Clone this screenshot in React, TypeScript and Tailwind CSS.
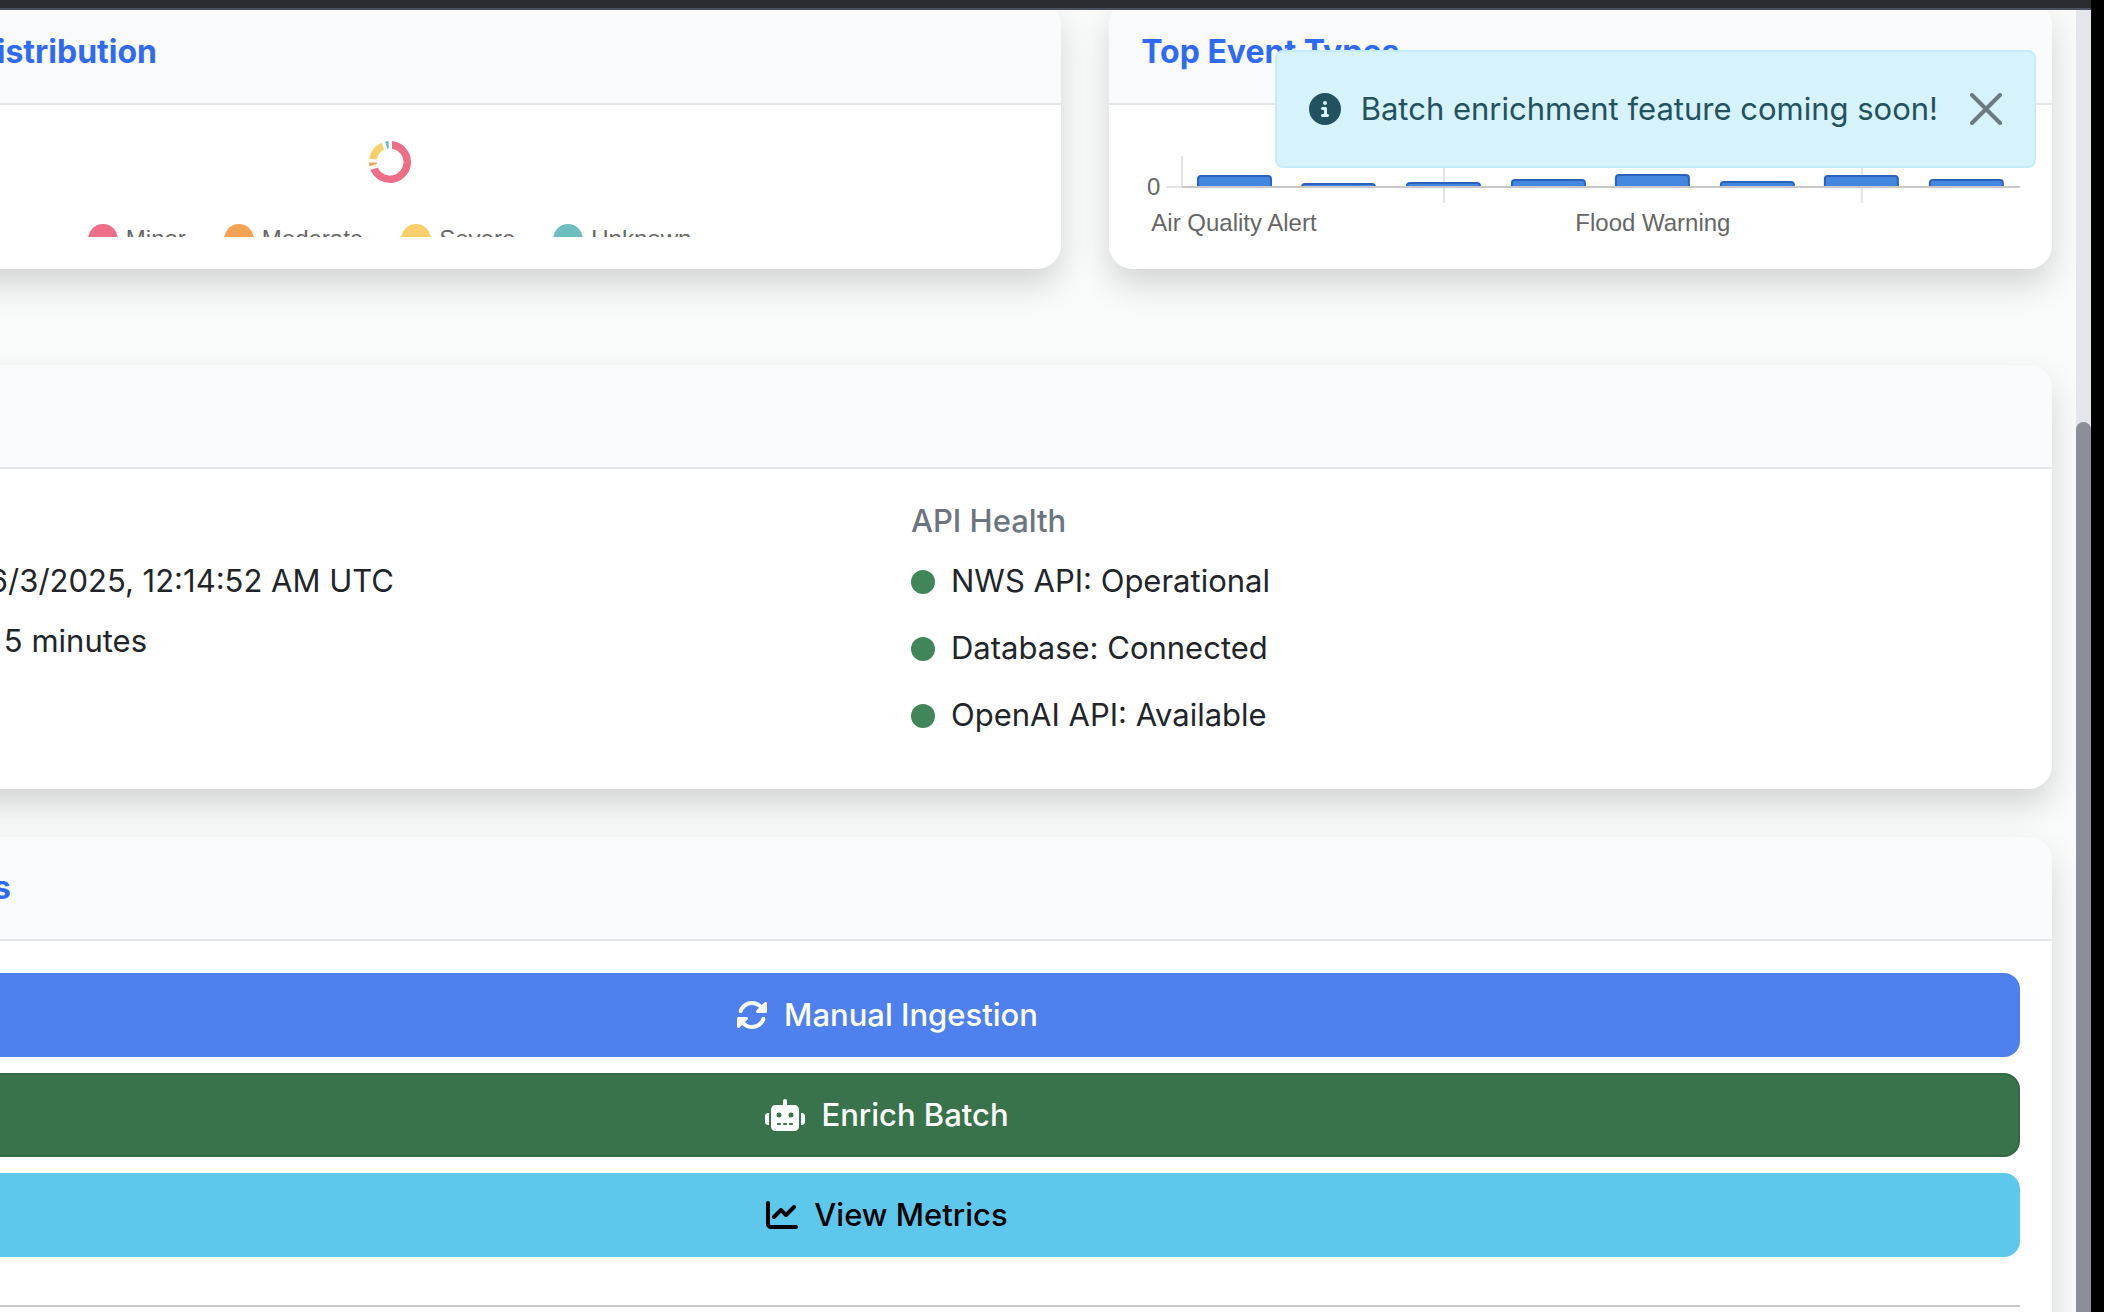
import type { ReactNode } from "react";
import { FaChartLine, FaCircleInfo, FaRobot, FaRotate } from "react-icons/fa6";

const severities = [
  { label: "Minor", dot: "bg-[#ef6e87]" },
  { label: "Moderate", dot: "bg-[#f2a354]" },
  { label: "Severe", dot: "bg-[#f8cf6a]" },
  { label: "Unknown", dot: "bg-[#6fbebf]" },
];

const bars = [
  { x: 56, h: 12 },
  { x: 160, h: 4 },
  { x: 265, h: 5 },
  { x: 370, h: 8 },
  { x: 474, h: 13 },
  { x: 579, h: 6 },
  { x: 683, h: 12 },
  { x: 788, h: 8 },
];

const health = [
  "NWS API: Operational",
  "Database: Connected",
  "OpenAI API: Available",
];

const actions = [
  {
    label: "Manual Ingestion",
    icon: FaRotate,
    iconSize: "h-8 w-8",
    style: "bg-[#4f81ee] border-[#4f81ee] text-white",
  },
  {
    label: "Enrich Batch",
    icon: FaRobot,
    iconSize: "h-8 w-10",
    style: "bg-[#38734b] border-[#336a45] text-white",
  },
  {
    label: "View Metrics",
    icon: FaChartLine,
    iconSize: "h-8 w-8",
    style: "bg-[#5ec7ec] border-[#5ec7ec] text-black",
  },
];

function Card({
  title,
  className = "",
  children,
}: {
  title: ReactNode;
  className?: string;
  children: ReactNode;
}) {
  return (
    <section
      className={`rounded-3xl bg-white shadow-[0_16px_32px_rgba(0,0,0,0.15)] ${className}`}
    >
      <header className="h-[104px] rounded-t-3xl border-b-2 border-[#e4e6ea] bg-[#f9fafc] px-8 py-8 text-[32px] leading-[38px] font-bold text-[#2f6af5]">
        {title}
      </header>
      <div className="p-8">{children}</div>
    </section>
  );
}

function SeverityChart() {
  return (
    <div className="h-[100px] overflow-hidden pr-1">
      <svg
        viewBox="-25 -25 50 50"
        className="mx-auto block size-[50px]"
        role="img"
        aria-label="Severity distribution"
      >
        <path
          fill="#ef6e87"
          d="M2-20.9A21 21 0 1 1-19.5 7.8L-12.2 5.8A13.5 13.5 0 1 0 2-13.3Z"
        />
        <path fill="#f2a354" d="M-21 .4-13.5.5-12.8 1.7-20.5 4.5Z" />
        <path
          fill="#f8cf6a"
          d="M-20.8-3A21 21 0 0 1-8.3-19.3L-6-12.2A13.5 13.5 0 0 0-13.2-2.8Z"
        />
        <path fill="#6fbebf" d="M-5-20.4-1.3-21V-13.3L-2.7-13.3Z" />
      </svg>
      <ul className="mt-[37px] flex items-center justify-center gap-[38px] font-['Liberation_Sans',sans-serif] text-2xl leading-[30px] text-[#666]">
        {severities.map((s) => (
          <li key={s.label} className="flex items-center gap-2">
            <span className={`size-[30px] rounded-full ${s.dot}`} />
            {s.label}
          </li>
        ))}
      </ul>
    </div>
  );
}

function EventChart() {
  return (
    <svg
      viewBox="0 0 879 100"
      className="block h-[100px] w-full"
      role="img"
      aria-label="Top event types"
    >
      <g fill="#e4e4e4">
        <rect x="40" y="19" width="2" height="31" />
        <rect x="302" y="19" width="2" height="47" />
        <rect x="720" y="19" width="2" height="47" />
        <rect x="25" y="49" width="16" height="2" />
      </g>
      {bars.map((b) => (
        <g key={b.x}>
          <path
            fill="#2a62bd"
            d={`M${b.x} 50V${54 - b.h}q0-4 4-4h67q4 0 4 4V50Z`}
          />
          <path
            fill="#4387de"
            d={`M${b.x + 2} 50V${Math.min(50, 54 - b.h)}q0-2 2-2h67q2 0 2 2V50Z`}
          />
        </g>
      ))}
      <rect x="41" y="49" width="838" height="2" fill="#c8c8c8" />
      <g
        fill="#666"
        fontSize="24"
        fontFamily="'Liberation Sans', sans-serif"
      >
        <text x="6" y="58">
          0
        </text>
        <text x="93" y="94" textAnchor="middle">
          Air Quality Alert
        </text>
        <text x="512" y="94" textAnchor="middle">
          Flood Warning
        </text>
      </g>
    </svg>
  );
}

function Toast() {
  return (
    <div
      role="alert"
      className="absolute top-[50px] right-[68px] flex h-[118px] items-center rounded-lg border-2 border-[#c4edf9] bg-[#d6f3fb] px-8 text-[31px] leading-[48px] text-[#225260]"
    >
      <FaCircleInfo className="size-8" />
      <span className="ml-5 whitespace-nowrap">
        Batch enrichment feature coming soon!
      </span>
      <button type="button" aria-label="Close" className="ml-8">
        <svg
          viewBox="0 0 32 32"
          className="size-8"
          stroke="#6b7b80"
          strokeWidth="4"
          strokeLinecap="round"
        >
          <path d="M2 2 30 30M30 2 2 30" />
        </svg>
      </button>
    </div>
  );
}

export default function App() {
  return (
    <div className="flex h-screen overflow-hidden bg-black font-[Inter,sans-serif] text-[31px] text-[#212529]">
      <div className="flex min-w-0 flex-1 flex-col">
        <div className="h-2.5 shrink-0 border-b-2 border-[#4b5065] bg-[#2b2c32]" />
        <div className="flex min-h-0 flex-1">
          <main className="min-w-0 flex-1 overflow-hidden bg-[#f9fbfa]">
            <div className="-mt-[9px] mr-6 -ml-[278px]">
              <div className="grid grid-cols-12 gap-12">
                <Card
                  className="col-span-7"
                  title={
                    <h2 className="w-[403px] text-right">Distribution</h2>
                  }
                >
                  <SeverityChart />
                </Card>
                <Card className="col-span-5" title={<h2>Top Event Types</h2>}>
                  <EventChart />
                </Card>
              </div>

              <Card className="mt-24" title={null}>
                <div className="grid grid-cols-2 gap-12">
                  <div className="mt-14 leading-[48px]">
                    <p className="mb-3 w-[640px] text-right">
                      6/3/2025, 12:14:52 AM UTC
                    </p>
                    <p className="w-[393px] text-right">5 minutes</p>
                  </div>
                  <div>
                    <h3 className="mb-4 leading-[39px] font-medium text-[#6c757d]">
                      API Health
                    </h3>
                    <ul>
                      {health.map((item) => (
                        <li
                          key={item}
                          className="mb-4 flex h-[51px] items-center gap-4"
                        >
                          <span className="size-6 rounded-full bg-[#418658]" />
                          {item}
                        </li>
                      ))}
                    </ul>
                  </div>
                </div>
              </Card>

              <Card
                className="mt-12"
                title={<h2 className="w-[257px] text-right">Actions</h2>}
              >
                <div className="flex flex-col gap-4">
                  {actions.map(({ label, icon: Icon, iconSize, style }) => (
                    <button
                      key={label}
                      type="button"
                      className={`flex h-[84px] items-center justify-center gap-4 rounded-2xl border-2 font-medium ${style}`}
                    >
                      <Icon className={iconSize} />
                      {label}
                    </button>
                  ))}
                </div>
                <hr className="my-12 border-t-2 border-[#c8c9ca]" />
              </Card>
            </div>
          </main>
          <div className="w-[15px] bg-[#e5e6eb] pt-[412px]">
            <div className="h-full rounded-t-full bg-[#8b8f97]" />
          </div>
        </div>
      </div>
      <div className="w-[13px] shrink-0 bg-black" />
      <Toast />
    </div>
  );
}
